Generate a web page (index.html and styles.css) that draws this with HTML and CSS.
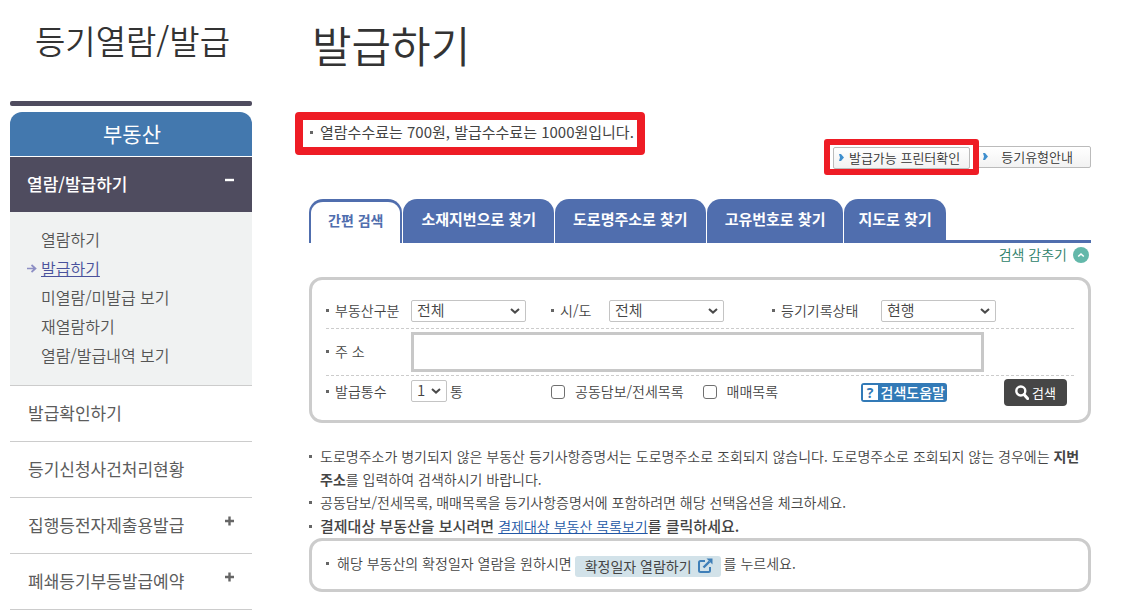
FILE: index.html
```html
<!DOCTYPE html>
<html lang="ko">
<head>
<meta charset="utf-8">
<title>발급하기</title>
<link rel="stylesheet" href="styles.css">
</head>
<body>
<div class="page">
  <aside class="sidebar">
    <h2 class="sidebar-title">등기열람/발급</h2>
    <div class="sidebar-rule"></div>
    <div class="sidebar-head">부동산</div>
    <nav class="menu">
      <a href="#" class="menu-item menu-item-open">열람/발급하기
        <svg class="menu-sign" viewBox="0 0 10 10"><path d="M0 5h9" stroke="#fff" stroke-width="2.4"/></svg>
      </a>
      <ul class="submenu">
        <li><a href="#">열람하기</a></li>
        <li class="current"><svg class="arrow" viewBox="0 0 10 9"><path d="M0 4.5h8M4.5 1l4 3.5l-4 3.5" fill="none" stroke="#8d8fc4" stroke-width="1.7"/></svg><a href="#">발급하기</a></li>
        <li><a href="#">미열람/미발급 보기</a></li>
        <li><a href="#">재열람하기</a></li>
        <li><a href="#">열람/발급내역 보기</a></li>
      </ul>
      <a href="#" class="menu-item">발급확인하기</a>
      <a href="#" class="menu-item">등기신청사건처리현황</a>
      <a href="#" class="menu-item">집행등전자제출용발급
        <svg class="menu-sign" viewBox="0 0 10 10"><path d="M0 5h9M4.5 .5v9" stroke="#666" stroke-width="2.4"/></svg>
      </a>
      <a href="#" class="menu-item">폐쇄등기부등발급예약
        <svg class="menu-sign" viewBox="0 0 10 10"><path d="M0 5h9M4.5 .5v9" stroke="#666" stroke-width="2.4"/></svg>
      </a>
    </nav>
  </aside>

  <main class="content">
    <h1 class="title">발급하기</h1>
    <p class="fee">열람수수료는 700원, 발급수수료는 1000원입니다.</p>
    <div class="tools">
      <div class="marked"><button type="button" class="tool"><svg class="tri" viewBox="0 0 5 7"><path d="M0 0h2l3 3.5L2 7H0l1-3.5z" fill="#3f8fce"/></svg>발급가능 프린터확인</button></div>
      <button type="button" class="tool tool-wide"><svg class="tri" viewBox="0 0 5 7"><path d="M0 0h2l3 3.5L2 7H0l1-3.5z" fill="#3f8fce"/></svg>등기유형안내</button>
    </div>

    <div class="tabs">
      <button type="button" class="tab tab-active">간편 검색</button>
      <button type="button" class="tab">소재지번으로 찾기</button>
      <button type="button" class="tab">도로명주소로 찾기</button>
      <button type="button" class="tab">고유번호로 찾기</button>
      <button type="button" class="tab tab-short">지도로 찾기</button>
      <span class="tabs-line"></span>
    </div>

    <div class="fold">
      <button type="button" class="fold-button">검색 감추기
        <svg class="fold-icon" viewBox="0 0 16 16"><circle cx="8" cy="8" r="8" fill="#63b8aa"/><path d="M5.2 9.5L8 7l2.8 2.5" fill="none" stroke="#fff" stroke-width="1.6"/></svg>
      </button>
    </div>

    <form class="panel search">
      <div class="row row-filters">
        <label class="label" for="kind">부동산구분</label>
        <span class="select"><select id="kind"><option>전체</option></select><svg viewBox="0 0 10 6"><path d="M1 1l4 3.6L9 1" fill="none" stroke="#4a4a4a" stroke-width="2"/></svg></span>
        <label class="label" for="sido">시/도</label>
        <span class="select"><select id="sido"><option>전체</option></select><svg viewBox="0 0 10 6"><path d="M1 1l4 3.6L9 1" fill="none" stroke="#4a4a4a" stroke-width="2"/></svg></span>
        <label class="label" for="state">등기기록상태</label>
        <span class="select"><select id="state"><option>현행</option></select><svg viewBox="0 0 10 6"><path d="M1 1l4 3.6L9 1" fill="none" stroke="#4a4a4a" stroke-width="2"/></svg></span>
      </div>
      <div class="row row-address">
        <label class="label" for="address">주 소</label>
        <input class="address" id="address" type="text">
      </div>
      <div class="row row-options">
        <label class="label" for="copies">발급통수</label>
        <span class="copies"><span class="select select-small"><select id="copies"><option>1</option></select><svg viewBox="0 0 10 6"><path d="M1 1l4 3.6L9 1" fill="none" stroke="#4a4a4a" stroke-width="2"/></svg></span>통</span>
        <label class="check"><input type="checkbox">공동담보/전세목록</label>
        <label class="check"><input type="checkbox">매매목록</label>
        <button type="button" class="help"><span class="help-mark">?</span>검색도움말</button>
        <button type="submit" class="submit"><svg viewBox="0 0 14 15"><circle cx="5.8" cy="6" r="4.5" fill="none" stroke="#fff" stroke-width="2.4"/><path d="M9 9.6l3.6 4" stroke="#fff" stroke-width="3" stroke-linecap="round"/></svg>검색</button>
      </div>
    </form>

    <ul class="notes">
      <li>도로명주소가 병기되지 않은 부동산 등기사항증명서는 도로명주소로 조회되지 않습니다. 도로명주소로 조회되지 않는 경우에는 <b>지번</b> <b>주소</b>를 입력하여 검색하시기 바랍니다.</li>
      <li>공동담보/전세목록, 매매목록을 등기사항증명서에 포함하려면 해당 선택옵션을 체크하세요.</li>
      <li class="strong">결제대상 부동산을 보시려면 <a href="#">결제대상 부동산 목록보기</a>를 클릭하세요.</li>
    </ul>

    <div class="panel confirm">
      <span class="label">해당 부동산의 확정일자 열람을 원하시면</span>
      <button type="button" class="open">확정일자 열람하기
        <svg viewBox="0 0 16 16"><path d="M8 3H3.5Q2 3 2 4.500V12.500Q2 14 3.500 14H11.500Q13 14 13 12.500V9" fill="none" stroke="#3f7fb8" stroke-width="2"/><path d="M6.500 9.500L12.500 3.500" stroke="#3f7fb8" stroke-width="2.400"/><path d="M9.500 .5H15.500V6.500z" fill="#3f7fb8"/></svg>
      </button>
      <span>를 누르세요.</span>
    </div>
  </main>
</div>
</body>
</html>
```
FILE: styles.css
```css
* { box-sizing: border-box; }

body {
  margin: 0;
  background: #fff;
  color: #444;
  font: 350 14px/23px "Noto Sans CJK KR", "Noto Sans", sans-serif;
}

button, input, select { font: inherit; color: inherit; margin: 0; }
button { border: 0; padding: 0; background: none; cursor: pointer; white-space: nowrap; }
h1, h2, p, ul { margin: 0; padding: 0; }
ul { list-style: none; }

.page { display: flex; padding: 0 42px 0 10px; gap: 57px; }

/* sidebar */
.sidebar { flex: 0 0 242px; }
.sidebar-title {
  padding: 16px 0 37px 3px;
  color: #333;
  font-size: 33px;
  font-weight: 350;
  line-height: 48px;
  text-align: center;
}
.sidebar-rule { height: 5px; border-radius: 2px; background: #4f4c5f; }
.sidebar-head {
  margin: 6px 0 1px;
  padding: 0 0 2px 2px;
  border-radius: 12px 12px 0 0;
  background: #4378ae;
  color: #fff;
  font-size: 21px;
  font-weight: 400;
  line-height: 42px;
  text-align: center;
}
.menu-item {
  display: flex;
  justify-content: space-between;
  align-items: center;
  height: 56px;
  padding: 0 17px 3px 18px;
  border-bottom: 1px solid #ccc;
  color: #5c5c5c;
  font-size: 17px;
  font-weight: 400;
  text-decoration: none;
}
.menu-item-open {
  height: 55px;
  padding-left: 17px;
  border: 0;
  background: #4f4c5f;
  color: #fff;
  font-weight: 500;
}
.menu-sign { width: 10px; height: 10px; margin-bottom: 6px; }
.submenu {
  padding: 13px 0 15px 31px;
  border-bottom: 1px solid #ccc;
  background: #f0f2f2;
  font-size: 16px;
  line-height: 29px;
}
.submenu a { color: #555; text-decoration: none; }
.submenu .current { position: relative; }
.submenu .current a { color: #4a529c; text-decoration: underline; }
.arrow { position: absolute; left: -14px; top: 10px; width: 10px; height: 9px; }

/* heading area */
.content { flex: 1; min-width: 0; }
.title {
  padding: 14px 0 38px 3px;
  color: #333;
  font-size: 43px;
  font-weight: 350;
  line-height: 60px;
}
.fee {
  width: fit-content;
  margin-left: -14px;
  padding: 0 3px 4px 7px;
  border: 8px solid #ee1c25;
  border-radius: 4px;
  font-size: 15px;
  font-weight: 400;
}
.fee::before { margin-right: 7px; }
.tools {
  display: flex;
  justify-content: flex-end;
  align-items: center;
  margin-top: -16px;
}
.marked {
  z-index: 1;
  padding: 2px 3px 0;
  border: 6px solid #ee1c25;
  border-radius: 3px;
}
.tool {
  display: flex;
  align-items: center;
  gap: 5px;
  height: 22px;
  padding: 0 9px 1px 5px;
  border: 1px solid #bbb;
  border-radius: 2px;
  background: linear-gradient(#fff, #f2f2f2);
  color: #333;
  font-size: 13px;
}
.tool-wide { gap: 13px; margin-left: -3px; padding: 0 17px 1px 6px; }
.tri { width: 5px; height: 7px; }

/* tabs */
.tabs { display: flex; gap: 1px; margin-top: 24px; }
.tab {
  height: 44px;
  padding: 0 18px 5px;
  border-radius: 14px 14px 0 0;
  background: #506eae;
  color: #fff;
  font-size: 15px;
  font-weight: 700;
}
.tab-active {
  padding: 0 17px 4px;
  border: 3px solid #506eae;
  border-width: 3px 2px 0;
  background: #fff;
  color: #506eae;
  font-size: 14px;
}
.tab-short { padding: 0 14px 5px; }
.tabs-line { flex: 1; margin-left: -1px; border-bottom: 3px solid #506eae; }
.fold { display: flex; justify-content: flex-end; padding: 0 2px 11px; }
.fold-button { display: flex; align-items: center; gap: 6px; color: #2c7e68; }
.fold-icon { width: 16px; height: 16px; }

/* search form */
.panel { border: 3px solid #ccc; border-radius: 13px; }
.search { padding: 0 14px; }
.row { display: flex; align-items: center; border-bottom: 1px dashed #ccc; }
.label::before, .fee::before, .notes li::before {
  content: "";
  display: inline-block;
  width: 3px;
  height: 3px;
  background: #666;
  vertical-align: 4px;
}
.label { white-space: nowrap; }
.label::before { margin-right: 6px; }
.row > .label { flex: 0 0 85px; }
.row-filters {
  display: grid;
  grid-template-columns: 85px 140px 58px 163px 109px 1fr;
  padding: 19px 0 6px;
}
.select { position: relative; display: inline-block; width: 115px; height: 22px; }
.select select {
  appearance: none;
  display: block;
  width: 100%;
  height: 100%;
  padding: 0 5px 2px;
  border: 1px solid #c4c4c4;
  border-radius: 2px;
  background: #fff;
  font-size: 15px;
  line-height: 18px;
}
.select svg { position: absolute; right: 6px; top: 8px; width: 10px; height: 6px; pointer-events: none; }
.select-small { width: 36px; }
.row-address { padding: 3px 0; }
.row-address .label { padding-bottom: 2px; }
.address {
  flex: 0 1 573px;
  min-width: 0;
  height: 40px;
  border: 3px solid #c8c8c8;
  background: #fff;
}
.row-options { padding: 3px 7px 14px 0; border: 0; }
.row-options > .label, .row-options .check, .copies { padding-bottom: 2px; }
.copies { display: flex; gap: 3px; width: 140px; }
.check { display: flex; align-items: center; margin-right: 19px; white-space: nowrap; }
.check input {
  appearance: none;
  width: 14px;
  height: 14px;
  margin-right: 10px;
  border: 1px solid #707070;
  border-radius: 3px;
  background: #fff;
}
.help {
  display: flex;
  align-items: center;
  gap: 3px;
  height: 19px;
  margin-left: auto;
  padding: 0 2px;
  border-radius: 3px;
  background: #327ab7;
  color: #fff;
  font-weight: 500;
  line-height: 17px;
}
.help-mark {
  width: 15px;
  background: #fff;
  color: #327ab7;
  font-family: "Open Sans", sans-serif;
  font-weight: 700;
  line-height: 15px;
}
.submit {
  display: flex;
  align-items: center;
  justify-content: center;
  gap: 3px;
  width: 63px;
  height: 27px;
  margin-left: 57px;
  border-radius: 4px;
  background: #464646;
  color: #fff;
  font-size: 13px;
  font-weight: 400;
}
.submit svg { width: 14px; height: 15px; }

/* notes */
.notes { padding: 22px 0 0; }
.notes li { padding-left: 11px; }
.notes li::before { margin: 0 8px 0 -11px; }
.notes b { font-weight: 700; }
.notes .strong { font-size: 15px; font-weight: 500; }
.notes a { color: #2257a5; font-size: 14px; font-weight: 350; }
.confirm { display: flex; gap: 3px; padding: 11px 14px 12px; }
.confirm .label::before { margin-right: 8px; }
.open {
  display: flex;
  align-items: center;
  gap: 5px;
  height: 21px;
  margin-top: 4px;
  padding: 0 8px 1px 10px;
  border-radius: 3px;
  background: #d2e2e9;
  font-weight: 400;
}
.open svg { width: 16px; height: 16px; }
```
